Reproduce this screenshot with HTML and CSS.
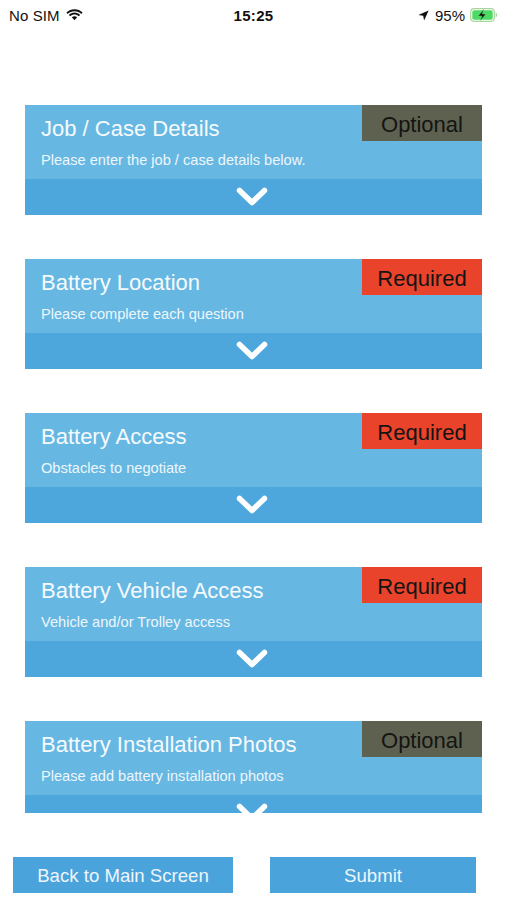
FILE: index.html
```html
<!DOCTYPE html>
<html>
  <head>
    <meta name="viewport" content="width=device-width, initial-scale=1.0, user-scalable=no">
    <meta charset="utf-8">
    <title>Battery Survey</title>
    <link rel="stylesheet" href="styles.css">
  </head>

  <body>

    <!--Status bar-->
    <div class="statusBar">
      <div class="statusLeft">
        No SIM
        <svg class="wifi" width="17" height="12" viewBox="0 0 17 12">
          <path d="M8.5 2.2c2.6 0 5 1 6.8 2.7l1.3-1.4C14.5 1.4 11.6.2 8.5.2S2.5 1.4.4 3.5l1.3 1.4C3.5 3.2 5.9 2.2 8.5 2.2z" fill="#111"/>
          <path d="M8.5 5.6c1.6 0 3.1.6 4.3 1.7l1.3-1.4C12.6 4.5 10.6 3.6 8.5 3.6S4.4 4.5 2.9 5.9l1.3 1.4c1.2-1.1 2.7-1.7 4.3-1.7z" fill="#111"/>
          <path d="M8.5 7.2c-1 0-1.9.4-2.7 1.1L8.5 11.2l2.7-2.9c-.8-.7-1.7-1.1-2.7-1.1z" fill="#111"/>
        </svg>
      </div>
      <div class="statusTime">15:25</div>
      <div class="statusRight">
        <svg class="locArrow" width="11" height="11" viewBox="0 0 11 11">
          <path d="M10.6.4L.4 4.9l4.8.9.9 4.8z" fill="#111"/>
        </svg>
        <span>95%</span>
        <svg class="battery" width="28" height="14" viewBox="0 0 28 14">
          <rect x="0.7" y="0.7" width="23.6" height="12.6" rx="3.2" fill="none" stroke="#a9d69a" stroke-width="1.2"/>
          <rect x="2.3" y="2.3" width="20.4" height="9.4" rx="1.8" fill="#4cd964"/>
          <path d="M25.6 4.6v4.8c.9-.3 1.5-1.3 1.5-2.4s-.6-2.1-1.5-2.4z" fill="#a9d69a"/>
          <path d="M13.6 1.6L8.2 8h3.6l-1.4 4.4L16 6h-3.6z" fill="#111" stroke="#4cd964" stroke-width="0.6"/>
        </svg>
      </div>
    </div>
    <!---->

    <div class="sectionList">

      <div class="section">
        <div class="sectionHead">
          <div class="sectionTitle">Job / Case Details</div>
          <div class="sectionSub">Please enter the job / case details below.</div>
        </div>
        <div class="sectionToggle">
          <svg width="32" height="20" viewBox="0 0 32 20"><polyline points="3.5,3.5 16,15.5 28.5,3.5" fill="none" stroke="#FFF" stroke-width="5.5" stroke-linecap="round" stroke-linejoin="round"/></svg>
        </div>
        <div class="badge badgeOptional">Optional</div>
      </div>

      <div class="section">
        <div class="sectionHead">
          <div class="sectionTitle">Battery Location</div>
          <div class="sectionSub">Please complete each question</div>
        </div>
        <div class="sectionToggle">
          <svg width="32" height="20" viewBox="0 0 32 20"><polyline points="3.5,3.5 16,15.5 28.5,3.5" fill="none" stroke="#FFF" stroke-width="5.5" stroke-linecap="round" stroke-linejoin="round"/></svg>
        </div>
        <div class="badge badgeRequired">Required</div>
      </div>

      <div class="section">
        <div class="sectionHead">
          <div class="sectionTitle">Battery Access</div>
          <div class="sectionSub">Obstacles to negotiate</div>
        </div>
        <div class="sectionToggle">
          <svg width="32" height="20" viewBox="0 0 32 20"><polyline points="3.5,3.5 16,15.5 28.5,3.5" fill="none" stroke="#FFF" stroke-width="5.5" stroke-linecap="round" stroke-linejoin="round"/></svg>
        </div>
        <div class="badge badgeRequired">Required</div>
      </div>

      <div class="section">
        <div class="sectionHead">
          <div class="sectionTitle">Battery Vehicle Access</div>
          <div class="sectionSub">Vehicle and/or Trolley access</div>
        </div>
        <div class="sectionToggle">
          <svg width="32" height="20" viewBox="0 0 32 20"><polyline points="3.5,3.5 16,15.5 28.5,3.5" fill="none" stroke="#FFF" stroke-width="5.5" stroke-linecap="round" stroke-linejoin="round"/></svg>
        </div>
        <div class="badge badgeRequired">Required</div>
      </div>

      <div class="section">
        <div class="sectionHead">
          <div class="sectionTitle">Battery Installation Photos</div>
          <div class="sectionSub">Please add battery installation photos</div>
        </div>
        <div class="sectionToggle">
          <svg width="32" height="20" viewBox="0 0 32 20"><polyline points="3.5,3.5 16,15.5 28.5,3.5" fill="none" stroke="#FFF" stroke-width="5.5" stroke-linecap="round" stroke-linejoin="round"/></svg>
        </div>
        <div class="badge badgeOptional">Optional</div>
      </div>

    </div>

    <div class="footer">
      <button class="footBtn backBtn">Back to Main Screen</button>
      <button class="footBtn submitBtn">Submit</button>
    </div>

  </body>
</html>
```

FILE: styles.css
```css
html,body{
  font-family: "Helvetica Neue", Helvetica, "Liberation Sans", Arial, sans-serif;
  height: 100%;
  width: 100%;
  overflow: hidden;
  margin: 0px;
  padding: 0px;
}

body{
  background-color: #FFF;
  display: flex;
  flex-direction: column;
}

/* status bar */
.statusBar{
  height: 30px;
  flex: none;
  display: flex;
  align-items: center;
  justify-content: space-between;
  padding: 0px 9px 0px 9px;
  font-size: 15px;
  color: #111;
  position: relative;
}

.statusLeft{
  display: flex;
  align-items: center;
  gap: 6px;
  letter-spacing: 0.1px;
}

.wifi{
  margin-top: -1px;
}

.statusTime{
  position: absolute;
  left: 0px;
  right: 0px;
  text-align: center;
  font-weight: bold;
  font-size: 15px;
  letter-spacing: 0.3px;
  pointer-events: none;
}

.statusRight{
  display: flex;
  align-items: center;
  gap: 4px;
}

.locArrow{
  margin-right: 2px;
}

.battery{
  margin-left: 1px;
}

/* sections */
.sectionList{
  height: 783px;
  flex: none;
  overflow: hidden;
  display: flex;
  flex-direction: column;
  gap: 44px;
  padding: 75px 25px 0px 25px;
  box-sizing: border-box;
}

.section{
  position: relative;
  flex: none;
  width: 457px;
  color: #FFF;
}

.sectionHead{
  height: 74px;
  box-sizing: border-box;
  padding: 11px 16px 0px 16px;
  background-color: #66B8E3;
}

.sectionTitle{
  font-size: 22px;
  line-height: 26px;
  color: #F6FAFD;
}

.sectionSub{
  margin-top: 9px;
  font-size: 14.6px;
  line-height: 18px;
  color: #EEF6FB;
}

.sectionToggle{
  height: 36px;
  background-color: #4DA7DC;
  display: flex;
  align-items: center;
  justify-content: center;
  padding-right: 3px;
}

.badge{
  position: absolute;
  top: 0px;
  right: 0px;
  width: 120px;
  height: 36px;
  box-sizing: border-box;
  padding-top: 2px;
  line-height: 36px;
  text-align: center;
  font-size: 22px;
  color: #141414;
}

.badgeOptional{
  background-color: #5E614F;
}

.badgeRequired{
  background-color: #E9432B;
}

/* footer */
.footer{
  flex: none;
  display: flex;
  padding: 44px 0px 0px 13px;
}

.footBtn{
  height: 36px;
  border: none;
  border-radius: 0px;
  background-color: #4BA3DB;
  color: #EEF6FC;
  font-family: inherit;
  font-size: 18.6px;
  padding: 2px 0px 0px 0px;
}

.backBtn{
  width: 220px;
}

.submitBtn{
  width: 206px;
  margin-left: 37px;
}
```
